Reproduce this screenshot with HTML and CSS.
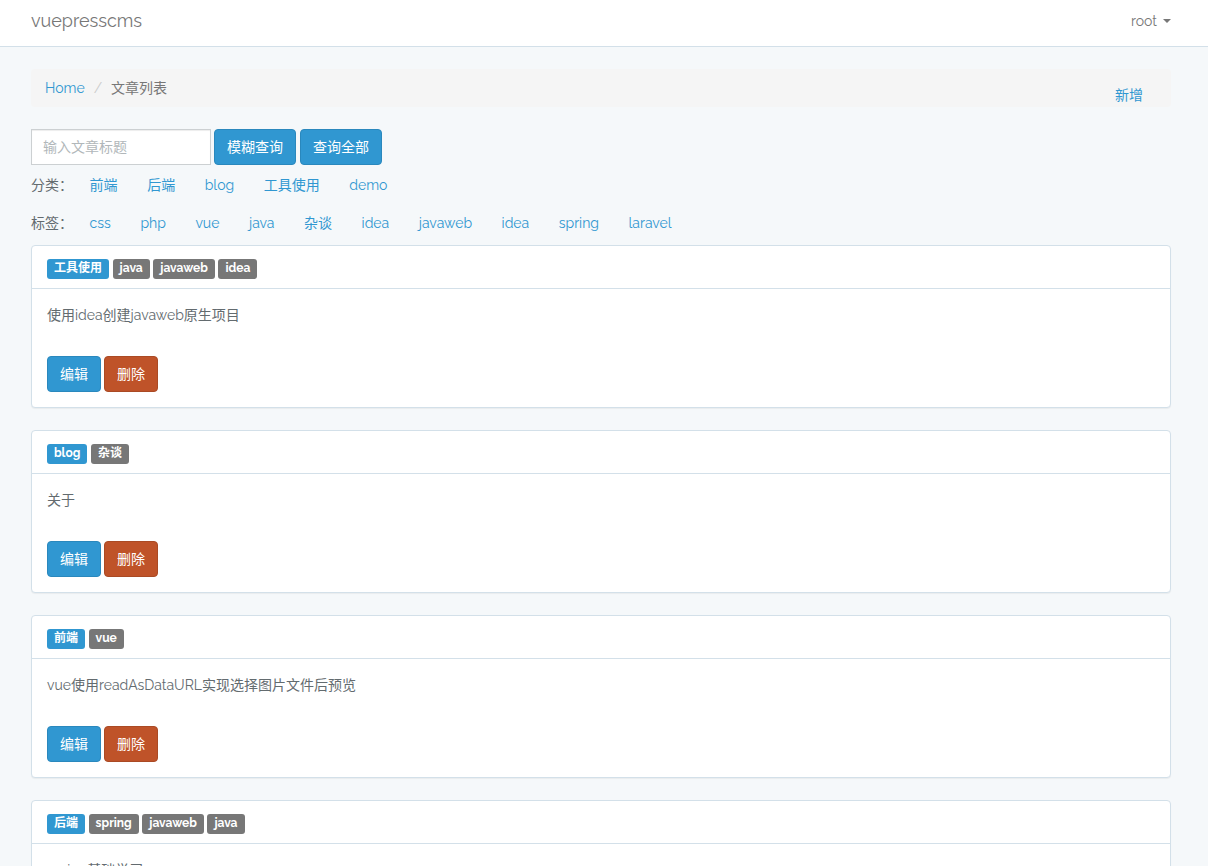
FILE: index.html
```html
<!DOCTYPE html>
<html lang="zh-CN">
<head>
<meta charset="utf-8">
<meta name="viewport" content="width=device-width, initial-scale=1">
<title>vuepresscms</title>
<link rel="stylesheet" href="styles.css">
</head>
<body>
<header class="navbar">
  <a class="brand" href="#">vuepresscms</a>
  <button class="user" type="button" aria-haspopup="true">root <span class="caret"></span></button>
</header>
<main class="container">
  <nav class="breadcrumb" aria-label="breadcrumb">
    <ol class="crumbs">
      <li><a href="#">Home</a></li>
      <li class="separator" aria-hidden="true">/</li>
      <li class="active">文章列表</li>
    </ol>
    <a class="create" href="#">新增</a>
  </nav>
  <form class="search">
    <input class="field" type="text" placeholder="输入文章标题" aria-label="文章标题">
    <button class="btn primary" type="button">模糊查询</button>
    <button class="btn primary" type="button">查询全部</button>
  </form>
  <div class="filter">
    <span>分类：</span>
    <a href="#">前端</a>
    <a href="#">后端</a>
    <a href="#">blog</a>
    <a href="#">工具使用</a>
    <a href="#">demo</a>
  </div>
  <div class="filter">
    <span>标签：</span>
    <a href="#">css</a>
    <a href="#">php</a>
    <a href="#">vue</a>
    <a href="#">java</a>
    <a href="#">杂谈</a>
    <a href="#">idea</a>
    <a href="#">javaweb</a>
    <a href="#">idea</a>
    <a href="#">spring</a>
    <a href="#">laravel</a>
  </div>
  <section class="articles">
    <article class="panel">
      <div class="panel-heading">
        <span class="label category">工具使用</span>
        <span class="label">java</span>
        <span class="label">javaweb</span>
        <span class="label">idea</span>
      </div>
      <div class="panel-body">
        <p class="title">使用idea创建javaweb原生项目</p>
        <div class="actions"><button class="btn primary" type="button">编辑</button><button class="btn danger" type="button">删除</button></div>
      </div>
    </article>
    <article class="panel">
      <div class="panel-heading">
        <span class="label category">blog</span>
        <span class="label">杂谈</span>
      </div>
      <div class="panel-body">
        <p class="title">关于</p>
        <div class="actions"><button class="btn primary" type="button">编辑</button><button class="btn danger" type="button">删除</button></div>
      </div>
    </article>
    <article class="panel">
      <div class="panel-heading">
        <span class="label category">前端</span>
        <span class="label">vue</span>
      </div>
      <div class="panel-body">
        <p class="title">vue使用readAsDataURL实现选择图片文件后预览</p>
        <div class="actions"><button class="btn primary" type="button">编辑</button><button class="btn danger" type="button">删除</button></div>
      </div>
    </article>
    <article class="panel">
      <div class="panel-heading">
        <span class="label category">后端</span>
        <span class="label">spring</span>
        <span class="label">javaweb</span>
        <span class="label">java</span>
      </div>
      <div class="panel-body">
        <p class="title">spring基础学习</p>
        <div class="actions"><button class="btn primary" type="button">编辑</button><button class="btn danger" type="button">删除</button></div>
      </div>
    </article>
  </section>
</main>
</body>
</html>
```

FILE: styles.css
```css
* { box-sizing: border-box; }
html { scrollbar-width: none; }
body {
  margin: 0;
  background: #f5f8fa;
  color: #636b6f;
  font: 14px/22px Raleway, Lato, "Noto Sans CJK SC", sans-serif;
}
button, input { font: inherit; }
a { color: #3097d1; text-decoration: none; }
.navbar {
  display: flex;
  justify-content: space-between;
  align-items: center;
  min-height: 47px;
  padding: 0 37px 4px 31px;
  background: #fff;
  border-bottom: 1px solid #d3e0e9;
}
.brand { color: #777; font-size: 18px; }
.user {
  display: flex;
  align-items: center;
  gap: 6px;
  padding: 0;
  border: 0;
  background: none;
  color: #777;
}
.caret {
  border-top: 4px solid #777;
  border-left: 4px solid transparent;
  border-right: 4px solid transparent;
}
.container { padding: 22px 37px 0 31px; }
.breadcrumb {
  display: flex;
  justify-content: space-between;
  padding: 8px 28px 8px 14px;
  margin-bottom: 22px;
  background: #f5f5f5;
  border-radius: 4px;
}
.crumbs {
  display: flex;
  gap: 9px;
  margin: 0;
  padding: 0;
  list-style: none;
}
.separator { color: #ccc; }
.active { color: #777; }
.create { padding-top: 7px; height: 22px; }
.search { display: flex; gap: 4px; margin-bottom: 1px; }
.field {
  width: 180px;
  height: 36px;
  margin-right: -1px;
  padding: 6px 11px;
  border: 1px solid #ccd0d2;
  border-radius: 0;
  background: #fff;
  color: #555;
  box-shadow: inset 0 1px 1px rgba(0, 0, 0, .075);
}
.field::placeholder { color: #b1b7ba; opacity: 1; }
.btn {
  height: 36px;
  padding: 6px 12px;
  border: 1px solid;
  border-radius: 4px;
  color: #fff;
  line-height: 22px;
}
.primary { background: #3097d1; border-color: #2a88bd; }
.danger { background: #bf5329; border-color: #aa4a24; }
.filter { padding: 8px 0; }
.filter a { padding: 0 13px; }
.articles { display: grid; gap: 22px; padding-top: 3px; }
.panel {
  background: #fff;
  border: 1px solid #d3e0e9;
  border-radius: 4px;
  box-shadow: 0 1px 1px rgba(0, 0, 0, .05);
}
.panel-heading {
  padding: 13px 15px 7px;
  border-bottom: 1px solid #d3e0e9;
}
.label {
  display: inline-block;
  height: 20px;
  padding: 0 7px;
  border-radius: 3px;
  background: #777;
  color: #fff;
  font-size: 12px;
  font-weight: 700;
  line-height: 18px;
  vertical-align: top;
}
.category { background: #3097d1; }
.panel-body { padding: 15px; }
.title { margin: 0 0 30px; }
.actions { display: flex; gap: 3px; }
```
